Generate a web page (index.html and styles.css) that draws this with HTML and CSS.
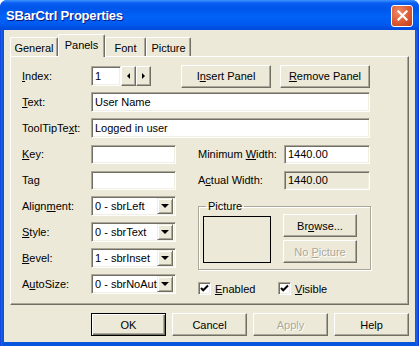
FILE: index.html
```html
<!DOCTYPE html>
<html lang="en">
<head>
  <meta charset="UTF-8" />
  <title>SBarCtrl Properties</title>
  <link rel="stylesheet" href="styles.css">
</head>
<body>

  <div class="window">
    <div class="titlebar">
      <span class="title">SBarCtrl Properties</span>
      <span class="close">
        <svg width="11" height="11" viewBox="0 0 11 11"><path d="M1.5 1.5 L9.5 9.5 M9.5 1.5 L1.5 9.5" stroke="#fff" stroke-width="2.2" stroke-linecap="square"/></svg>
      </span>
    </div>

    <div class="client">
      <div class="tabs">
        <span class="tab tab-general">General</span>
        <span class="tab tab-panels active">Panels</span>
        <span class="tab tab-font">Font</span>
        <span class="tab tab-picture">Picture</span>
      </div>

      <div class="panel">
        <div class="row">
          <span class="lbl"><u>I</u>ndex:</span>
          <span class="field index-field">1</span>
          <span class="spin-btn"><i class="tri tri-left"></i></span>
          <span class="spin-btn"><i class="tri tri-right"></i></span>
          <span class="btn btn-panel insert"><span>I<u>n</u>sert Panel</span></span>
          <span class="btn btn-panel"><span><u>R</u>emove Panel</span></span>
        </div>
        <div class="row">
          <span class="lbl"><u>T</u>ext:</span>
          <span class="field wide-field">User Name</span>
        </div>
        <div class="row">
          <span class="lbl">ToolTipTe<u>x</u>t:</span>
          <span class="field wide-field">Logged in user</span>
        </div>

        <div class="cols">
          <div class="col-left">
            <div class="row">
              <span class="lbl"><u>K</u>ey:</span>
              <span class="field short-field"></span>
            </div>
            <div class="row">
              <span class="lbl">Ta<u>g</u></span>
              <span class="field short-field"></span>
            </div>
            <div class="row">
              <span class="lbl">Align<u>m</u>ent:</span>
              <span class="field combo"><span class="combo-text">0 - sbrLeft</span><span class="drop"><i class="tri tri-down"></i></span></span>
            </div>
            <div class="row">
              <span class="lbl"><u>S</u>tyle:</span>
              <span class="field combo"><span class="combo-text">0 - sbrText</span><span class="drop"><i class="tri tri-down"></i></span></span>
            </div>
            <div class="row">
              <span class="lbl"><u>B</u>evel:</span>
              <span class="field combo"><span class="combo-text">1 - sbrInset</span><span class="drop"><i class="tri tri-down"></i></span></span>
            </div>
            <div class="row">
              <span class="lbl">A<u>u</u>toSize:</span>
              <span class="field combo"><span class="combo-text">0 - sbrNoAutoSize</span><span class="drop"><i class="tri tri-down"></i></span></span>
            </div>
          </div>

          <div class="col-right">
            <div class="row">
              <span class="lbl lbl-wide">Minimum <u>W</u>idth:</span>
              <span class="field num-field">1440.00</span>
            </div>
            <div class="row">
              <span class="lbl lbl-wide">A<u>c</u>tual Width:</span>
              <span class="field num-field readonly">1440.00</span>
            </div>

            <fieldset class="group">
              <legend>Picture</legend>
              <div class="group-body">
                <div class="picture-box"></div>
                <div class="group-buttons">
                  <span class="btn btn-small"><span>Br<u>o</u>wse...</span></span>
                  <span class="btn btn-small disabled"><span>No <u>P</u>icture</span></span>
                </div>
              </div>
            </fieldset>

            <div class="checks">
              <span class="check-item">
                <span class="checkbox"><svg width="9" height="9" viewBox="0 0 9 9"><path d="M1 4 L3.2 6.3 L8 1.5" fill="none" stroke="#000" stroke-width="2"/></svg></span>
                <span><u>E</u>nabled</span>
              </span>
              <span class="check-item">
                <span class="checkbox"><svg width="9" height="9" viewBox="0 0 9 9"><path d="M1 4 L3.2 6.3 L8 1.5" fill="none" stroke="#000" stroke-width="2"/></svg></span>
                <span><u>V</u>isible</span>
              </span>
            </div>
          </div>
        </div>
      </div>

      <div class="footer">
        <span class="btn btn-footer default">OK</span>
        <span class="btn btn-footer">Cancel</span>
        <span class="btn btn-footer disabled">Apply</span>
        <span class="btn btn-footer">Help</span>
      </div>
    </div>
  </div>

</body>
</html>
```

FILE: styles.css
```css
* {
  box-sizing: border-box;
}

body {
  margin: 0;
  background: #fff;
  font-family: 'Liberation Sans', Arial, sans-serif;
  font-size: 11px;
  color: #000;
}

u {
  text-decoration: underline;
  text-underline-offset: 1px;
}

.window {
  width: 419px;
  height: 346px;
  display: flex;
  flex-direction: column;
  background: linear-gradient(90deg, #0831d9 0, #1f62e6 1px, #0855dd 3px, #0855dd 415px, #1f62e6 417px, #0831d9 419px);
  border-radius: 7px 7px 0 0;
  padding-bottom: 4px;
  overflow: hidden;
}

.titlebar {
  height: 30px;
  flex-shrink: 0;
  display: flex;
  align-items: center;
  justify-content: space-between;
  padding: 0 6px 0 6px;
  background: linear-gradient(#3d95ff 0, #0a5ef2 3px, #0055ea 8px, #0062f7 17px, #005af0 24px, #0049db 30px);
}

.title {
  color: #fff;
  font-weight: bold;
  font-size: 13px;
  letter-spacing: -0.2px;
  text-shadow: 1px 1px #0a1883;
  padding-top: 1px;
}

.close {
  width: 22px;
  height: 22px;
  display: flex;
  align-items: center;
  justify-content: center;
  border: 1px solid #fff;
  border-radius: 3px;
  background: radial-gradient(circle at 35% 30%, #f08b66, #dc5a34 55%, #c0391b);
  margin-top: 1px;
}

.client {
  flex: 1;
  margin: 0 4px;
  background: #ece9d8;
  padding: 4px 6px 0 6px;
}

/* tabs */

.tabs {
  height: 22px;
  display: flex;
  align-items: flex-end;
}

.tab {
  height: 19px;
  display: flex;
  align-items: center;
  justify-content: center;
  padding-top: 1px;
  border-top: 1px solid #fff;
  border-left: 1px solid #fff;
  border-right: 1px solid #716f64;
  box-shadow: inset -1px 0 #aca899;
  border-radius: 2px 2px 0 0;
}

.tab-general { width: 48px; }
.tab-panels { width: 47px; }
.tab-font { width: 41px; }
.tab-picture { width: 45px; }

.tab.active {
  height: 23px;
  margin-bottom: -1px;
  padding-bottom: 3px;
  position: relative;
  z-index: 1;
  background: #ece9d8;
}

.panel {
  height: 249px;
  border: 1px solid;
  border-color: #fff #716f64 #716f64 #fff;
  box-shadow: inset -1px -1px #aca899;
  padding: 6px 0 0 11px;
}

.row {
  height: 26px;
  display: flex;
  align-items: center;
}

.lbl {
  width: 69px;
  flex-shrink: 0;
  white-space: nowrap;
}

.lbl-wide {
  width: 86px;
}

/* sunken fields */

.field {
  height: 20px;
  background: #fff;
  border: 1px solid;
  border-color: #aca899 #fff #fff #aca899;
  box-shadow: inset 1px 1px #716f64, inset -1px -1px #f1efe2;
  padding: 0 3px;
  display: flex;
  align-items: center;
  white-space: nowrap;
  overflow: hidden;
}

.index-field { width: 30px; }
.wide-field { width: 279px; }
.short-field { width: 85px; height: 19px; }
.num-field { width: 86px; height: 19px; }

.readonly {
  background: #ece9d8;
}

.combo {
  width: 86px;
  padding: 0 2px 0 3px;
}

.combo-text {
  flex: 1;
  overflow: hidden;
}

.drop {
  width: 16px;
  height: 16px;
  flex-shrink: 0;
  display: flex;
  align-items: center;
  justify-content: center;
  background: #ece9d8;
  border: 1px solid;
  border-color: #f1efe2 #716f64 #716f64 #f1efe2;
  box-shadow: inset 1px 1px #fff, inset -1px -1px #aca899;
}

.tri {
  width: 0;
  height: 0;
  border-style: solid;
  border-color: transparent;
}

.tri-down {
  border-width: 4px 4px 0 4px;
  border-top-color: #000;
}

.tri-left {
  border-width: 3px 3px 3px 0;
  border-right-color: #000;
}

.tri-right {
  border-width: 3px 0 3px 3px;
  border-left-color: #000;
}

.spin-btn {
  width: 15px;
  height: 20px;
  display: flex;
  align-items: center;
  justify-content: center;
  background: #ece9d8;
  border: 1px solid;
  border-color: #fff #716f64 #716f64 #fff;
  box-shadow: inset -1px -1px #aca899;
}

/* buttons */

.btn {
  display: flex;
  align-items: center;
  justify-content: center;
  background: #ece9d8;
  border: 1px solid;
  border-color: #fff #716f64 #716f64 #fff;
  box-shadow: inset -1px -1px #aca899;
  white-space: nowrap;
}

.btn-panel {
  width: 90px;
  height: 23px;
}

.insert {
  margin-left: 30px;
  margin-right: 9px;
}

.btn-small {
  width: 74px;
  height: 23px;
}

.btn-footer {
  width: 75px;
  height: 23px;
}

.btn.default {
  border: 1px solid #000;
  box-shadow: inset 1px 1px #fff, inset -1px -1px #716f64, inset -2px -2px #aca899;
}

.btn.disabled {
  color: #aca899;
  text-shadow: 1px 1px #fff;
}

/* lower columns */

.cols {
  display: flex;
  gap: 21px;
}

.col-left {
  width: 155px;
}

.col-left .short-field,
.col-left .combo {
  width: 85px;
}

.col-right {
  width: 173px;
}

.group {
  margin: 7px 0 0 0;
  padding: 2px 12px 6px 4px;
  width: 173px;
  border: 1px solid #aca899;
  box-shadow: inset 1px 1px #fff, 1px 1px #fff;
}

.group legend {
  padding: 0 2px;
  margin-left: 3px;
}

.group-body {
  display: flex;
  align-items: flex-start;
}

.picture-box {
  width: 68px;
  height: 47px;
  margin-top: 2px;
  border: 1px solid #000;
}

.group-buttons {
  margin-left: 12px;
  display: flex;
  flex-direction: column;
  gap: 3px;
}

.checks {
  display: flex;
  align-items: center;
  margin-top: 12px;
}

.check-item {
  width: 80px;
  display: flex;
  align-items: center;
  gap: 4px;
}

.checkbox {
  width: 13px;
  height: 13px;
  display: flex;
  align-items: center;
  justify-content: center;
  background: #fff;
  border: 1px solid;
  border-color: #aca899 #fff #fff #aca899;
  box-shadow: inset 1px 1px #716f64, inset -1px -1px #f1efe2;
}

.footer {
  display: flex;
  justify-content: flex-end;
  gap: 6px;
  margin-top: 8px;
  padding-right: 0;
}
```
